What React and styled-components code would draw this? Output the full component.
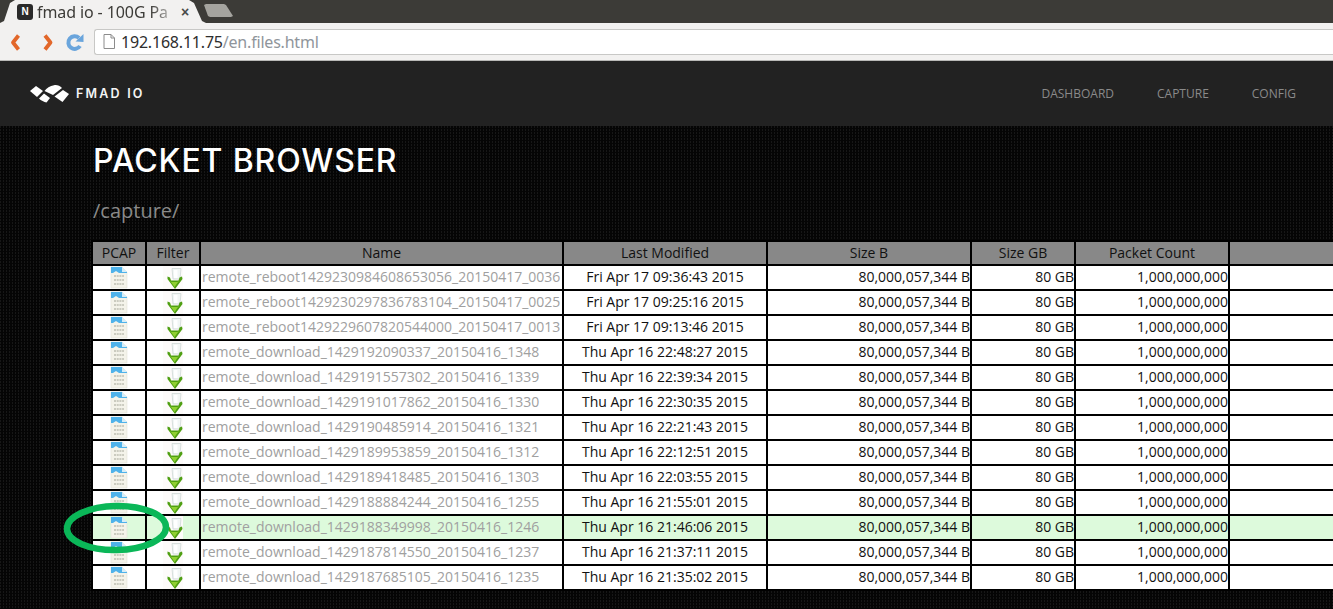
import React from "react";
import styled, { createGlobalStyle } from "styled-components";

const Global = createGlobalStyle`
  html, body { margin: 0; padding: 0; height: 100%; background: #000; overflow: hidden; }
  * { box-sizing: border-box; }
`;

const Window = styled.div`
  position: relative;
  width: 1333px;
  height: 609px;
  overflow: hidden;
  display: flex;
  flex-direction: column;
  font-family: "Open Sans", sans-serif;
`;

const TabStrip = styled.div`
  height: 23px;
  flex: none;
  background: #3c3b37;
  display: flex;
  align-items: flex-start;
`;

const Tab = styled.div`
  width: 206px;
  height: 23px;
  background: #f2f1f0;
  clip-path: polygon(0 23px, 4px 21px, 10px 3px, 15px 0, 189px 0, 194px 3px, 202px 21px, 206px 23px);
  display: flex;
  align-items: center;
  padding-left: 17px;
  flex: none;
`;

const Favicon = styled.div`
  width: 16px;
  height: 16px;
  background: #2a2a2a;
  border-radius: 3px;
  color: #fff;
  font: 700 10px/16px "Liberation Sans", sans-serif;
  text-align: center;
  flex: none;
`;

const TabTitle = styled.div`
  width: 135px;
  margin-left: 4px;
  font: 400 16px/22px "Noto Sans", sans-serif;
  letter-spacing: -0.1px;
  white-space: nowrap;
  color: #3c3b37;
  -webkit-mask-image: linear-gradient(to right, #000 84%, rgba(0,0,0,0.25) 100%);
  mask-image: linear-gradient(to right, #000 84%, rgba(0,0,0,0.25) 100%);
`;

const TabClose = styled.div`
  margin-left: 9px;
  font: 700 14px/22px "Liberation Sans", sans-serif;
  color: #4a4a4a;
`;

const NewTab = styled.div`
  width: 30px;
  height: 13px;
  margin: 4px 0 0 -3px;
  background: #a5a49f;
  clip-path: polygon(1px 1px, 3px 0, 21px 0, 23px 1px, 30px 12px, 28px 13px, 7px 13px, 5px 12px);
`;

const Toolbar = styled.div`
  height: 38px;
  flex: none;
  background: #f2f1f0;
  border-bottom: 1px solid #b9b9b7;
  display: flex;
  align-items: center;
  padding-left: 6px;
`;

const ToolIcon = styled.svg`
  flex: none;
  width: 20px;
  height: 20px;
  margin-right: ${(p) => p.$gap}px;
`;

const UrlBar = styled.div`
  flex: 1;
  height: 26px;
  background: #fff;
  border: 1px solid #c8c8c6;
  border-right: 0;
  border-radius: 3px 0 0 3px;
  display: flex;
  align-items: center;
  padding-left: 8px;
  gap: 6px;
  font: 400 16px "Noto Sans", sans-serif;
  letter-spacing: -0.2px;
`;

const Host = styled.span`
  color: #2e2e2e;
`;
const UrlPath = styled.span`
  color: #8f959b;
`;

const Nav = styled.header`
  height: 65px;
  flex: none;
  background: #222;
  display: flex;
  align-items: center;
  padding: 0 37px 0 30px;
`;

const Brand = styled.div`
  display: flex;
  align-items: center;
  gap: 6px;
  flex: 1;
`;

const BrandName = styled.span`
  font: 600 12.5px "Inter", sans-serif;
  letter-spacing: 2.2px;
  color: #f4f4f4;
`;

const NavLinks = styled.nav`
  display: flex;
  gap: 43px;
`;

const NavLink = styled.a`
  font: 400 12px "Open Sans", sans-serif;
  color: #8a8a8a;
`;

const Main = styled.main`
  flex: 1;
  padding: 16px 0 0 93px;
  background-color: #050505;
  background-image:
    repeating-linear-gradient(0deg, #050505 0 1px, transparent 1px 3px),
    repeating-linear-gradient(90deg, #171717 0 1px, transparent 1px 3px);
`;

const Title = styled.h1`
  margin: 0;
  font: 500 32px/38px "Inter", sans-serif;
  letter-spacing: 0.85px;
  color: #fff;
`;

const Path = styled.div`
  margin-top: 17px;
  font: 400 20px/28px "Open Sans", sans-serif;
  color: #8a8a8a;
`;

const Table = styled.table`
  margin: 15px 0 0 -2px;
  table-layout: fixed;
  width: 1251px;
  border-collapse: separate;
  border-spacing: 2px;
  background: #000;
  font: 400 14px "Open Sans", sans-serif;
`;

const Head = styled.th`
  height: 22px;
  padding: 0;
  background: #888;
  color: #111;
  font-weight: 400;
  text-align: center;
  line-height: 22px;
  overflow: hidden;
`;

const Cell = styled.td`
  height: 23px;
  padding: 0 0 0 ${(p) => (p.$align === "left" ? "1px" : "0")};
  background: ${(p) => (p.$hi ? "#ddfadc" : "#fff")};
  color: ${(p) => (p.$muted ? "#a0a0a0" : "#111")};
  text-align: ${(p) => p.$align || "center"};
  vertical-align: top;
  line-height: 21px;
  white-space: nowrap;
  overflow: hidden;
`;

const IconBox = styled.span`
  display: block;
  margin: 0 auto;
  width: 20px;
  height: 23px;
  background: ${(p) => p.$bg || "transparent"};
`;

const IconSvg = styled.svg`
  display: block;
`;

const Ring = styled.svg`
  position: absolute;
  left: 60px;
  top: 500px;
  width: 114px;
  height: 56px;
  pointer-events: none;
`;

const DocIcon = () => (
  <IconSvg width="20" height="23" viewBox="0 0 20 23">
    <path d="M2 1h11l5 5v16H2z" fill="#f4f3ea" stroke="#e2e2d8" strokeWidth="0.6" />
    <path d="M2 1h11l1 3 4 2v1H10L7 5 4 7H2z" fill="#4fb2ea" />
    <path d="M13 1l5 5h-5z" fill="#d5edf8" />
    <path d="M5 10h10M5 14h10M5 18h10" stroke="#bdbeb3" strokeWidth="1.6" strokeDasharray="2 0.7" />
  </IconSvg>
);

const FilterIcon = () => (
  <IconSvg width="20" height="23" viewBox="0 0 20 23">
    <path d="M9 2.500h9l-1 10.500H10z" fill="#f2f6f5" stroke="#cfd8d6" strokeWidth="0.8" />
    <path d="M11 4h3.500v8H11z" fill="#fff" />
    <path d="M4.500 10.500l2.500 1 1 3h7.500l1-3 2.500-1 .5 2.500-7.500 10-7.500-10z" fill="#4f9f12" />
    <path d="M6.500 14l2 2h6l2-2-5 7z" fill="#8fd032" />
  </IconSvg>
);

const rows = [
  ["remote_reboot1429230984608653056_20150417_0036", "Fri Apr 17 09:36:43 2015"],
  ["remote_reboot1429230297836783104_20150417_0025", "Fri Apr 17 09:25:16 2015"],
  ["remote_reboot1429229607820544000_20150417_0013", "Fri Apr 17 09:13:46 2015"],
  ["remote_download_1429192090337_20150416_1348", "Thu Apr 16 22:48:27 2015"],
  ["remote_download_1429191557302_20150416_1339", "Thu Apr 16 22:39:34 2015"],
  ["remote_download_1429191017862_20150416_1330", "Thu Apr 16 22:30:35 2015"],
  ["remote_download_1429190485914_20150416_1321", "Thu Apr 16 22:21:43 2015"],
  ["remote_download_1429189953859_20150416_1312", "Thu Apr 16 22:12:51 2015"],
  ["remote_download_1429189418485_20150416_1303", "Thu Apr 16 22:03:55 2015"],
  ["remote_download_1429188884244_20150416_1255", "Thu Apr 16 21:55:01 2015"],
  ["remote_download_1429188349998_20150416_1246", "Thu Apr 16 21:46:06 2015"],
  ["remote_download_1429187814550_20150416_1237", "Thu Apr 16 21:37:11 2015"],
  ["remote_download_1429187685105_20150416_1235", "Thu Apr 16 21:35:02 2015"],
];

const Col = styled.col`
  width: ${(p) => p.$w}px;
`;

const widths = [52, 52, 361, 202, 202, 102, 152, 110];

export default function App() {
  return (
    <Window>
      <Global />
      <TabStrip>
        <Tab>
          <Favicon>N</Favicon>
          <TabTitle>fmad io - 100G Pa</TabTitle>
          <TabClose>×</TabClose>
        </Tab>
        <NewTab />
      </TabStrip>
      <Toolbar>
        <ToolIcon $gap={11} viewBox="0 0 20 20">
          <path d="M12.500 3.500L7 10.500l5.500 7" fill="none" stroke="#e2672a" strokeWidth="3.8" strokeLinejoin="round" />
        </ToolIcon>
        <ToolIcon $gap={8} viewBox="0 0 20 20">
          <path d="M8 3.500l5.500 7-5.500 7" fill="none" stroke="#e2672a" strokeWidth="3.8" strokeLinejoin="round" />
        </ToolIcon>
        <ToolIcon $gap={9} viewBox="0 0 20 20">
          <path d="M15 14A6.300 6.300 0 1 1 14 6" fill="none" stroke="#6aa5dc" strokeWidth="4" />
          <path d="M10.500 9.500L18.500 10V2z" fill="#6aa5dc" />
        </ToolIcon>
        <UrlBar>
          <svg width="12" height="15" viewBox="0 0 12 15">
            <path d="M1 .5h7l3.500 3.500v10.500H1z" fill="#fff" stroke="#8c8c8c" />
            <path d="M8 .5V4h3.500" fill="none" stroke="#8c8c8c" />
          </svg>
          <span>
            <Host>192.168.11.75</Host>
            <UrlPath>/en.files.html</UrlPath>
          </span>
        </UrlBar>
      </Toolbar>
      <Nav>
        <Brand>
          <svg width="40" height="20" viewBox="0 0 40 20">
            <path d="M0 7L6 2l7 5-6 6z" fill="#fff" />
            <path d="M9 14.500L14 9.500l6 4.500-3.500 4.500C14 18 11 16.500 9 14.500z" fill="#fff" />
            <path d="M14.500 7C16.500 4 20 2 24 1.200c3-.5 6 .5 8 2.800L23 11z" fill="#fff" />
            <path d="M24.500 12.500L33 6l6 4-6.500 8z" fill="#fff" />
          </svg>
          <BrandName>FMAD IO</BrandName>
        </Brand>
        <NavLinks>
          <NavLink>DASHBOARD</NavLink>
          <NavLink>CAPTURE</NavLink>
          <NavLink>CONFIG</NavLink>
        </NavLinks>
      </Nav>
      <Main>
        <Title>PACKET BROWSER</Title>
        <Path>/capture/</Path>
        <Table>
          <colgroup>
            {widths.map((w, i) => (
              <Col key={i} $w={w} />
            ))}
          </colgroup>
          <thead>
            <tr>
              <Head>PCAP</Head>
              <Head>Filter</Head>
              <Head>Name</Head>
              <Head>Last Modified</Head>
              <Head>Size B</Head>
              <Head>Size GB</Head>
              <Head>Packet Count</Head>
              <Head />
            </tr>
          </thead>
          <tbody>
            {rows.map(([name, date], i) => {
              const hi = i === 10;
              return (
                <tr key={name}>
                  <Cell $hi={hi}>
                    <IconBox>
                      <DocIcon />
                    </IconBox>
                  </Cell>
                  <Cell $hi={hi}>
                    <IconBox $bg="#fdfbfa">
                      <FilterIcon />
                    </IconBox>
                  </Cell>
                  <Cell $hi={hi} $muted $align="left">{name}</Cell>
                  <Cell $hi={hi}>{date}</Cell>
                  <Cell $hi={hi} $align="right">80,000,057,344 B</Cell>
                  <Cell $hi={hi} $align="right">80 GB</Cell>
                  <Cell $hi={hi} $align="right">1,000,000,000</Cell>
                  <Cell $hi={hi} />
                </tr>
              );
            })}
          </tbody>
        </Table>
      </Main>
      <Ring viewBox="0 0 114 56">
        <ellipse cx="56.500" cy="28" rx="49.500" ry="22" transform="rotate(-1 56 28)" fill="none" stroke="#0ab758" strokeWidth="6.500" />
      </Ring>
    </Window>
  );
}
